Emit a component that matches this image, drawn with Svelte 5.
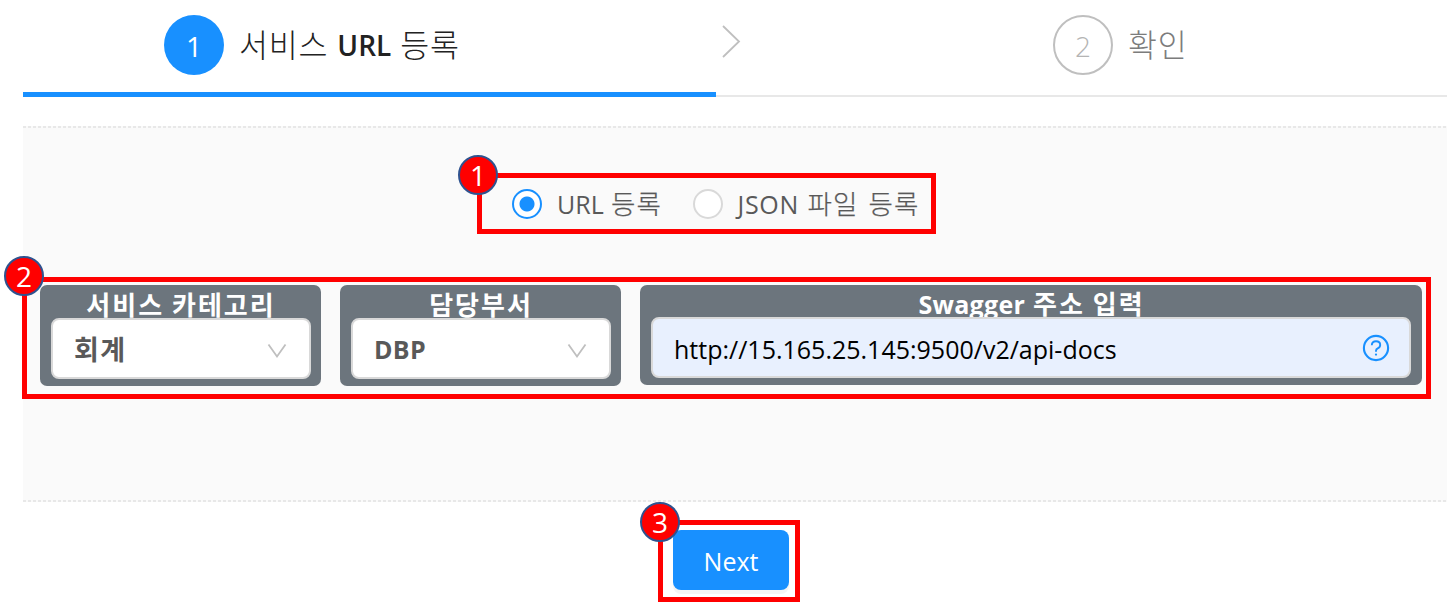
<script>
  const categories = [
    { title: '서비스 카테고리', value: '회계', korean: true },
    { title: '담당부서', value: 'DBP', korean: false }
  ];
</script>

<div class="page">
  <nav class="steps">
    <div class="step active">
      <span class="num">1</span>
      <span class="name"><span class="ko">서비스</span> <b>URL</b> <span class="ko">등록</span></span>
      <svg class="arrow" width="20" height="34" viewBox="0 0 20 34"><path d="M2 2L18 17.5L2 33" fill="none" stroke="#bfbfbf" stroke-width="1.8" /></svg>
    </div>
    <div class="step waiting">
      <span class="num">2</span>
      <span class="name"><span class="ko">확인</span></span>
    </div>
  </nav>

  <main>
    <div class="marked radios">
      <span class="badge">1</span>
      <label class="first"><i class="dot on"></i><span class="latin">URL</span><span class="ko">등록</span></label>
      <label><i class="dot"></i><span class="latin json">JSON</span><span class="ko">파일 등록</span></label>
    </div>

    <div class="marked fields">
      <span class="badge">2</span>
      {#each categories as c}
        <section class="card">
          <h2>{c.title}</h2>
          <div class="control">
            <span class="value" class:korean={c.korean}>{c.value}</span>
            <svg width="20" height="16" viewBox="0 0 20 16"><path d="M1.5 1.5L10 13.5L18.5 1.5" fill="none" stroke="#bfbfbf" stroke-width="1.8" /></svg>
          </div>
        </section>
      {/each}
      <section class="card address">
        <h2><span class="swagger">Swagger</span> 주소 입력</h2>
        <div class="control">
          <span class="url">http://15.165.25.145:9500/v2/api-docs</span>
          <svg width="28" height="28" viewBox="0 0 28 28" fill="none" stroke="#1890ff"><circle cx="14" cy="14" r="12.1" stroke-width="2.1" /><path d="M9.8 11.3C9.8 8.7 11.5 7.3 14 7.3S18.2 8.8 18.2 11C18.2 12.8 17.2 13.7 15.7 14.4C14.4 15 14 15.5 14 16.8V17.7" stroke-width="1.9" /><circle cx="14" cy="20.6" r="1.15" fill="#1890ff" stroke="none" /></svg>
        </div>
      </section>
    </div>
  </main>

  <footer>
    <div class="marked next">
      <span class="badge">3</span>
      <button>Next</button>
    </div>
  </footer>
</div>

<style>
  :global(body) { background: #fff; }
  .page {
    box-sizing: border-box;
    width: 1447px;
    height: 607px;
    overflow: hidden;
    font-family: "Open Sans", "Noto Sans CJK KR", sans-serif;
    color: #595959;
  }
  .page * { box-sizing: border-box; }
  .ko { font-family: "Noto Sans CJK KR", sans-serif; }

  .steps { display: flex; height: 97px; margin-left: 23px; box-shadow: inset 0 -2px #e8e8e8; }
  .step { position: relative; display: flex; align-items: flex-start; padding-top: 15px; white-space: nowrap; }
  .active { width: 693px; padding-left: 141px; border-bottom: 5px solid #1890ff; color: #222; }
  .waiting { padding-left: 337px; color: #7c7c7c; }
  .num {
    width: 60px;
    height: 60px;
    border-radius: 50%;
    line-height: 62px;
    font-size: 28px;
    text-align: center;
  }
  .active .num { background: #1890ff; color: #fff; }
  .waiting .num { border: 2px solid #bfbfbf; color: #b4b4b4; line-height: 58px; font-weight: 300; }
  .name { margin-left: 15px; line-height: 61px; font-size: 28px; display: flex; gap: 9px; }
  .name .ko { font-weight: 300; font-size: 31.5px; letter-spacing: 0.8px; line-height: 57px; }
  .name b { font-weight: 600; }
  .arrow { position: absolute; left: 698px; top: 24px; }

  main {
    height: 376px;
    margin: 29px 0 0 23px;
    padding-top: 47px;
    background:
      repeating-linear-gradient(90deg, #e8e8e8 0 3px, #fafafa 3px 5px) top / 100% 2px no-repeat,
      repeating-linear-gradient(90deg, #e8e8e8 0 3px, #fafafa 3px 5px) bottom / 100% 2px no-repeat,
      #fafafa;
  }
  .marked { position: relative; display: flex; border: 5px solid #f00; }
  .badge {
    position: absolute;
    width: 40px;
    height: 40px;
    border: 2px solid #2f528f;
    border-radius: 50%;
    background: #f00;
    color: #fff;
    font-size: 28px;
    line-height: 36px;
    text-align: center;
  }
  .radios { width: 459px; height: 61px; margin-left: 454px; padding-left: 30px; align-items: center; }
  .radios .badge { left: -24px; top: -23px; }
  label { display: flex; align-items: center; font-size: 25px; white-space: nowrap; line-height: 50px; }
  .first { width: 180.5px; }
  .dot { width: 30px; height: 30px; margin-right: 15px; border: 2px solid #d9d9d9; border-radius: 50%; background: #fff; }
  .dot.on { border-color: #1890ff; background: radial-gradient(circle, #1890ff 7px, #fff 8px); }
  label .latin { width: 54px; }
  label .json { width: 70px; letter-spacing: 0.7px; }
  label .ko { font-weight: 300; font-size: 26.5px; letter-spacing: 1px; word-spacing: 3.5px; line-height: 47px; margin-bottom: 3px; -webkit-text-stroke: 0.25px; }

  .fields { width: 1409px; height: 122px; margin: 43px 0 0 -1px; padding: 3px 4px 0 13px; gap: 19px; }
  .fields .badge { left: -23px; top: -26px; }
  .card { width: 281px; height: 101px; padding: 0 10px 0 11px; background: #6c757d; border-radius: 7px; }
  .address { width: 782px; height: 100px; }
  h2 {
    height: 33px;
    margin: 0;
    line-height: 37px;
    text-align: center;
    font-family: "Noto Sans CJK KR", sans-serif;
    font-weight: 700;
    font-size: 26px;
    letter-spacing: 2px;
    color: #fff;
    white-space: nowrap;
  }
  .address h2 { height: 32px; line-height: 35px; }
  .swagger { font-family: "Open Sans", sans-serif; font-size: 25px; letter-spacing: 0.3px; }
  .control {
    position: relative;
    display: flex;
    align-items: center;
    justify-content: space-between;
    width: 260px;
    height: 61px;
    padding: 0 22px 0 21px;
    background: #fff;
    border: 2px solid #d9d9d9;
    border-radius: 8px;
  }
  .control svg { flex: none; margin-top: 5px; }
  .address .control { width: 760px; padding-right: 19px; background: #e8f0fe; }
  .address .control svg { margin-top: 0; }
  .value { font-weight: 700; font-size: 25px; letter-spacing: 0.3px; }
  .korean { font-family: "Noto Sans CJK KR", sans-serif; font-size: 27px; letter-spacing: 1.5px; margin-top: -1px; }
  .url { font-size: 25px; color: #000; margin-top: 3px; }

  footer { padding-top: 18px; }
  .next { width: 142px; height: 82px; margin-left: 658px; padding: 5px 0 0 10px; }
  .next .badge { left: -23px; top: -23px; }
  button {
    width: 116px;
    height: 60px;
    padding: 1px 0 0 0;
    border: 0;
    border-radius: 8px;
    background: #1890ff;
    box-shadow: 0 4px 0 rgba(0, 0, 0, 0.045);
    color: #fff;
    font-family: "Open Sans", sans-serif;
    font-size: 25px;
  }
</style>
